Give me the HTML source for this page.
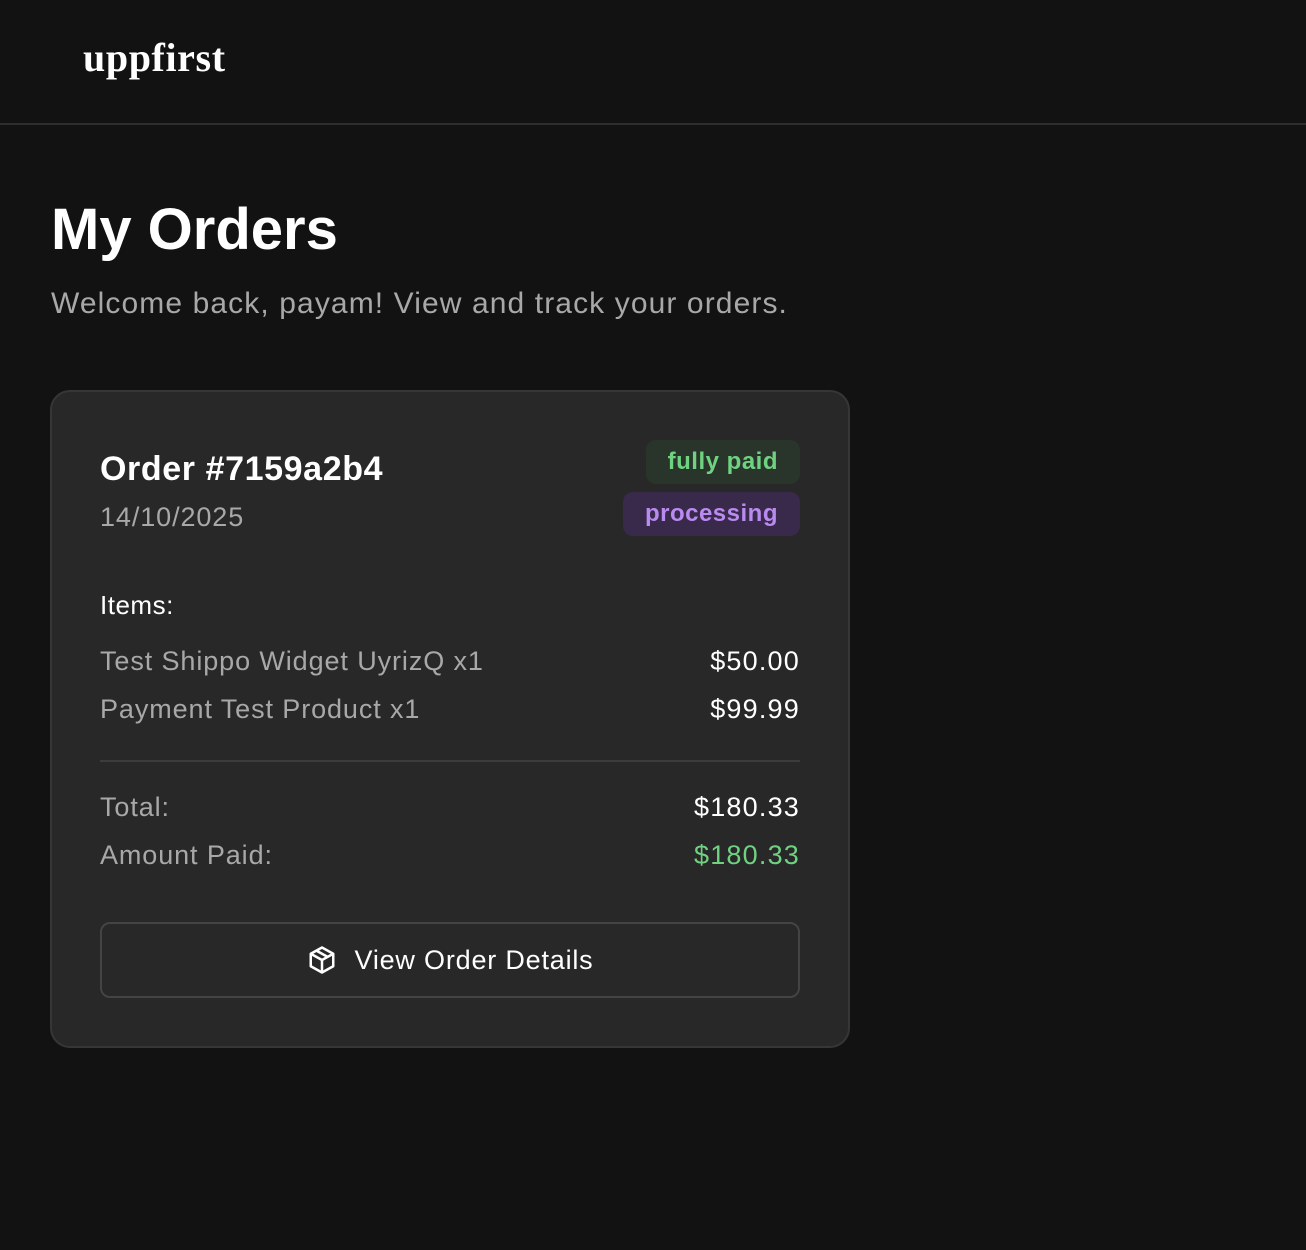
<!DOCTYPE html>
<html><head><style>
*{margin:0;padding:0;box-sizing:border-box}
body{width:1306px;height:1250px;background:#121212;font-family:"Liberation Sans",sans-serif;color:#fff;position:relative;overflow:hidden}
.hdr{height:125px;border-bottom:2px solid #2e2e2e}
.logo{position:absolute;left:83px;top:34px;font-family:"Liberation Serif",serif;font-size:40px;font-weight:bold;letter-spacing:0.6px}
h1{position:absolute;left:51px;top:196px;font-size:58px;font-weight:bold;letter-spacing:0px}
.sub{position:absolute;left:51px;top:287px;font-size:30px;color:#a8a8a8;letter-spacing:1.1px}
.card{position:absolute;left:50px;top:390px;width:800px;height:658px;background:#282828;border:2px solid #363636;border-radius:20px}
.a{position:absolute}
.badge{position:absolute;right:48px;height:44px;border-radius:10px;font-size:24px;font-weight:bold;line-height:44px;padding:0 22px;letter-spacing:0.5px}
.g{color:#a8a8a8;font-size:27px;letter-spacing:0.9px}
.w{font-size:27px;letter-spacing:1.2px}
.btn{position:absolute;left:48px;top:530px;width:700px;height:76px;border:2px solid #444;border-radius:10px;font-size:27px;letter-spacing:0.8px;display:flex;align-items:center;justify-content:center;gap:18px}
</style></head><body>
<div class="hdr"></div>
<div class="logo">uppfirst</div>
<h1>My Orders</h1>
<div class="sub">Welcome back, payam! View and track your orders.</div>
<div class="card">
<div class="a" style="left:48px;top:58px;font-size:34px;font-weight:bold;letter-spacing:0.6px">Order #7159a2b4</div>
<div class="a g" style="left:48px;top:110px">14/10/2025</div>
<div class="badge" style="top:48px;background:#29352b;color:#6fd281">fully paid</div>
<div class="badge" style="top:100px;background:#392a4b;color:#b98af0">processing</div>
<div class="a w" style="left:48px;top:198px;font-size:26px;letter-spacing:0.5px">Items:</div>
<div class="a g" style="left:48px;top:254px">Test Shippo Widget UyrizQ x1</div>
<div class="a w" style="right:48px;top:254px">$50.00</div>
<div class="a g" style="left:48px;top:302px">Payment Test Product x1</div>
<div class="a w" style="right:48px;top:302px">$99.99</div>
<div class="a" style="left:48px;top:368px;width:700px;height:2px;background:#3c3c3c"></div>
<div class="a g" style="left:48px;top:400px">Total:</div>
<div class="a w" style="right:48px;top:400px">$180.33</div>
<div class="a g" style="left:48px;top:448px">Amount Paid:</div>
<div class="a w" style="right:48px;top:448px;color:#6fd281">$180.33</div>
<div class="btn"><svg width="30" height="30" viewBox="0 0 24 24" fill="none" stroke="#fff" stroke-width="2" stroke-linejoin="round"><path d="M12 2l9 5v10l-9 5-9-5V7z"/><path d="M3 7l9 5 9-5M12 12v10M7.5 4.5l9 5"/></svg>View Order Details</div>
</div>
</body></html>
